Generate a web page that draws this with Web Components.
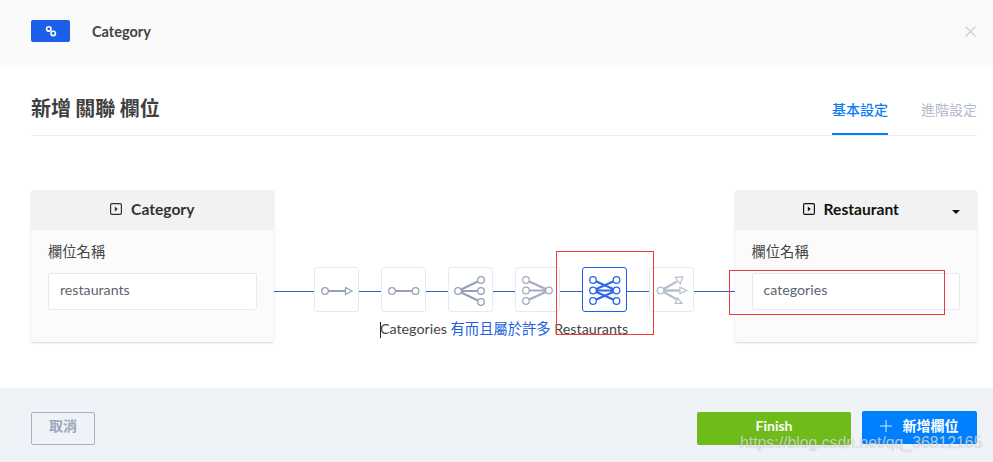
<!DOCTYPE html>
<html lang="zh-Hant">
<head>
<meta charset="utf-8">
<title>新增 關聯 欄位</title>
<style>
html,body{margin:0;padding:0;background:#fff}
body{font-family:Lato,"Noto Sans CJK TC",sans-serif;font-size:14px;color:#3f3f3f}
</style>
</head>
<body>
<rel-modal>
  <rel-topbar slot="top">Category</rel-topbar>
  <rel-titlebar slot="title">
    <span slot="title">新增 關聯 欄位</span>
    <rel-tab active>基本設定</rel-tab>
    <rel-tab>進階設定</rel-tab>
  </rel-titlebar>
  <rel-card slot="left" title-text="Category" field="restaurants"></rel-card>
  <rel-picker slot="middle">
    <rel-type kind="one-way"></rel-type>
    <rel-type kind="one-one"></rel-type>
    <rel-type kind="one-many"></rel-type>
    <rel-type kind="many-one"></rel-type>
    <rel-type kind="many-many" active></rel-type>
    <rel-type kind="poly"></rel-type>
    <span slot="caption">Categories <b>有而且屬於許多</b> Restaurants</span>
  </rel-picker>
  <rel-card slot="right" title-text="Restaurant" field="categories" dark caret></rel-card>
  <rel-footer slot="footer">
    <rel-btn slot="start" variant="ghost">取消</rel-btn>
    <rel-btn variant="green">Finish</rel-btn>
    <rel-btn variant="blue" plus>新增欄位</rel-btn>
  </rel-footer>
</rel-modal>
<script>
function shadow(el, html){ el.attachShadow({mode:'open'}).innerHTML = html; }

customElements.define('rel-modal', class extends HTMLElement{
  constructor(){super();shadow(this,`<style>
    :host{display:flex;flex-direction:column;width:993px;height:462px;position:relative;overflow:hidden;background:#fff}
    .body{flex:1;padding:0 16px 0 31px;min-height:0}
    .row{display:flex;align-items:flex-start;margin-top:54px}
    .mid{flex:1;min-width:0}
    .mark{position:absolute;border:1px solid #ee3a3a;box-sizing:border-box;pointer-events:none}
    .m1{left:556px;top:251px;width:98px;height:84px}
    .m2{left:729px;top:270px;width:216px;height:45px}
    .wm{position:absolute;left:740px;top:433px;font:15.8px/20px "Liberation Sans",sans-serif;color:rgba(255,255,255,.62);text-shadow:0 0 1px rgba(90,90,90,.45);white-space:nowrap}
  </style>
  <slot name="top"></slot>
  <div class="body">
    <slot name="title"></slot>
    <div class="row">
      <slot name="left"></slot>
      <div class="mid"><slot name="middle"></slot></div>
      <slot name="right"></slot>
    </div>
  </div>
  <slot name="footer"></slot>
  <div class="mark m1"></div>
  <div class="mark m2"></div>
  <div class="wm">https://blog.csdn.net/qq_36812165</div>`);}
});

customElements.define('rel-topbar', class extends HTMLElement{
  constructor(){super();shadow(this,`<style>
    :host{display:flex;align-items:center;height:65px;background:#fafafa;padding:0 17px 0 31px;flex:none;box-sizing:border-box}
    .badge{width:39px;height:22px;background:#1c5fe8;border-radius:2px;display:flex;align-items:center;justify-content:center;margin:-3px 22px 0 0}
    .name{font:700 14.5px/20px Lato,sans-serif;color:#444;flex:1;margin-top:-2px}
    svg{display:block}
    .x{margin-top:-3px}
  </style>
  <div class="badge"><svg width="12" height="12" viewBox="0 0 12 12" fill="none" stroke="#fff" stroke-width="1.6"><circle cx="3.8" cy="3.9" r="2.2"/><circle cx="8.2" cy="8.4" r="2.2"/></svg></div>
  <div class="name"><slot></slot></div>
  <svg class="x" width="11" height="11" viewBox="0 0 11 11" stroke="#cfcfcf" stroke-width="1.2"><path d="M.5.5l10 10M10.5.5l-10 10"/></svg>`);}
});

customElements.define('rel-titlebar', class extends HTMLElement{
  constructor(){super();shadow(this,`<style>
    :host{display:flex;align-items:flex-end;height:71px;box-sizing:border-box;border-bottom:1px solid #eeeeee;gap:33px}
    .t{flex:1;align-self:stretch;display:flex;align-items:center;padding-top:15px;box-sizing:border-box;font:700 20px/28px Lato,"Noto Sans CJK TC",sans-serif;word-spacing:-.5px;color:#3f3f3f}
    ::slotted(rel-tab){flex:none}
  </style><div class="t"><slot name="title"></slot></div><slot></slot>`);}
});

customElements.define('rel-tab', class extends HTMLElement{
  constructor(){super();shadow(this,`<style>
    :host{display:block;height:46px;box-sizing:border-box;padding-top:11px;font:14px/20px Lato,"Noto Sans CJK TC",sans-serif;color:#b3bac9;position:relative}
    :host([active]){color:#0a7bf0;font-weight:500}
    :host([active])::after{content:"";position:absolute;left:0;right:0;bottom:0;height:2px;background:#0080ff}
    .l{display:block}
  </style><span class="l"><slot></slot></span>`);}
});

customElements.define('rel-card', class extends HTMLElement{
  constructor(){super();
    const dark=this.hasAttribute('dark'),caret=this.hasAttribute('caret');
    shadow(this,`<style>
    :host{display:block;width:242.5px;flex:none;height:152px;border-radius:3px;background:#fbfbfc;box-shadow:0 1px 2px rgba(150,165,195,.45);overflow:hidden}
    .h{height:37px;padding-bottom:3px;${caret?'padding-right:10px;':''}background:#f2f2f2;display:flex;align-items:center;justify-content:center;gap:9px;position:relative;font:700 15.6px/20px Lato,sans-serif;color:${dark?'#111':'#333'}}
    .caret{position:absolute;left:217.500px;top:20px;width:0;height:0;border:4px solid transparent;border-top-color:#111;border-bottom:0}
    .b{padding:12px 17px 0}
    .lab{font:14.3px/20px Lato,"Noto Sans CJK TC",sans-serif;color:#444}
    .inp{margin-top:11px;height:37px;box-sizing:border-box;border:1px solid #e4e9f5;border-radius:2px;background:#fff;padding:0 11px;font:14.2px/31px Lato,sans-serif;color:#5c6470}
    svg{display:block}
  </style>
  <div class="h"><svg width="12" height="12" viewBox="0 0 12 12" fill="none" stroke="${dark?'#111':'#333'}" stroke-width="1.2"><rect x=".6" y=".6" width="10.8" height="10.8" rx="1.2"/><path d="M4.8 3.6L7.8 6l-3 2.4z" fill="${dark?'#111':'#333'}" stroke="none"/></svg><span>${this.getAttribute('title-text')}</span>${caret?'<i class="caret"></i>':''}</div>
  <div class="b"><div class="lab">欄位名稱</div><div class="inp">${this.getAttribute('field')}</div></div>`);}
});

customElements.define('rel-picker', class extends HTMLElement{
  constructor(){super();shadow(this,`<style>
    :host{display:block;padding-top:77px}
    .r{display:flex;justify-content:center;gap:22px;background:linear-gradient(#2a62dc,#2a62dc) 0 24px/100% 1px no-repeat}
    .c{margin-top:8px;text-align:center;font:14.3px/18px Lato,"Noto Sans CJK TC",sans-serif;color:#444;white-space:nowrap}
    .cur{display:inline-block;width:1px;height:16px;background:#222;vertical-align:-4px;margin-right:-1px}
  </style><div class="r"><slot></slot></div><div class="c"><i class="cur"></i><slot name="caption"></slot></div>`);}
  connectedCallback(){
    const b=this.querySelector('b');
    if(b){b.style.fontWeight='400';b.style.color='#2262dc';}
  }
});

const nodes=(list,st,f)=>list.map(([x,y])=>`<circle cx="${x}" cy="${y}" r="3.3" fill="${f}" stroke="${st}" stroke-width="1.3"/>`).join('');
const icons={
 'one-way':(s)=>`<path d="M14 24h18" stroke="${s}" stroke-width="2"/><path d="M31.500 20.500L38 24l-6.500 3.500z" fill="#fff" stroke="${s}" stroke-width="1.200"/>`+nodes([[11,24]],s,'#fff'),
 'one-one':(s)=>`<path d="M14 24h18" stroke="${s}" stroke-width="2"/>`+nodes([[11,24],[34.500,24]],s,'#fff'),
 'one-many':(s)=>`<path d="M10 24L33 13M10 24h23M10 24l23 11" stroke="${s}" stroke-width="2.200"/>`+nodes([[10,24],[33,13],[33,24],[33,35]],s,'#fff'),
 'many-one':(s)=>`<path d="M34 23.500L11 13M34 23.500H11M34 23.500L11 34" stroke="${s}" stroke-width="2.200"/>`+nodes([[11,13],[11,23.5],[11,34],[34,23.5]],s,'#fff'),
 'many-many':(s)=>`<path d="M11 13L34.500 23.500M34.500 13L11 23.500M11 34L34.500 23.500M34.500 34L11 23.500M11 23.500H34.500" stroke="${s}" stroke-width="2" fill="none"/>`+nodes([[11,13],[11,23.500],[11,34],[34.500,13],[34.500,23.500],[34.500,34]],s,'#fff'),
 'poly':(s)=>`<path d="M12 23.500L28 14.500M12 23.500H31M12 23.500L28 32.500" stroke="${s}" stroke-width="2.400"/><path d="M26.300 10.300L33.700 9.700 31.300 17zM31 20.200L37.700 23.500 31 26.800zM26.300 36.300H33L28.500 31z" fill="#fff" stroke="${s}" stroke-width="1.200" stroke-linejoin="miter"/>`+nodes([[11.500,23.500]],s,'#fff')
};
customElements.define('rel-type', class extends HTMLElement{
  constructor(){super();
    const a=this.hasAttribute('active'),k=this.getAttribute('kind');
    const s=a?'#2a66e6':(k==='poly'?'#b7bfcf':(k==='many-one'?'#a3acbd':'#97a1b4'));
    const bc=a?'#1c5fe8':(k==='one-many'?'#e4eafa':'#e6e9ef');
    shadow(this,`<style>
    :host{display:block;width:45px;height:45px;box-sizing:border-box;border:1px solid ${bc};border-radius:3px;background:#fff;flex:none}
    svg{display:block;margin:-1px}
  </style><svg width="45" height="45" viewBox="0 0 45 45" fill="none">${icons[k](s)}</svg>`);}
});

customElements.define('rel-footer', class extends HTMLElement{
  constructor(){super();shadow(this,`<style>
    :host{display:flex;height:74px;flex:none;background:#eff2f6;padding:24px 16px 0 31px;box-sizing:border-box;align-items:flex-start;gap:11px}
    .s{flex:1}
  </style><div class="s"><slot name="start"></slot></div><slot></slot>`);}
});

customElements.define('rel-btn', class extends HTMLElement{
  constructor(){super();shadow(this,`<style>
    :host{display:inline-flex;align-items:center;justify-content:center;height:33px;box-sizing:border-box;padding-bottom:5px;border-radius:2px;font:700 14px/20px Lato,"Noto Sans CJK TC",sans-serif;color:#fff}
    :host([variant=ghost]){width:64px;border:1px solid #a6b0c4;color:#9ca7ba;background:transparent}
    :host([variant=green]){width:154px;background:#6fbb1a}
    :host([variant=blue]){width:115px;background:#0080ff;margin-top:-1px;gap:11px;padding-bottom:3px;padding-right:1px}
    svg{display:block}
  </style>${this.hasAttribute('plus')?'<svg width="12" height="12" viewBox="0 0 12 12" stroke="#d5e8ff" stroke-width="1"><path d="M6 0v12M0 6h12"/></svg>':''}<slot></slot>`);}
});
</script>
</body>
</html>
